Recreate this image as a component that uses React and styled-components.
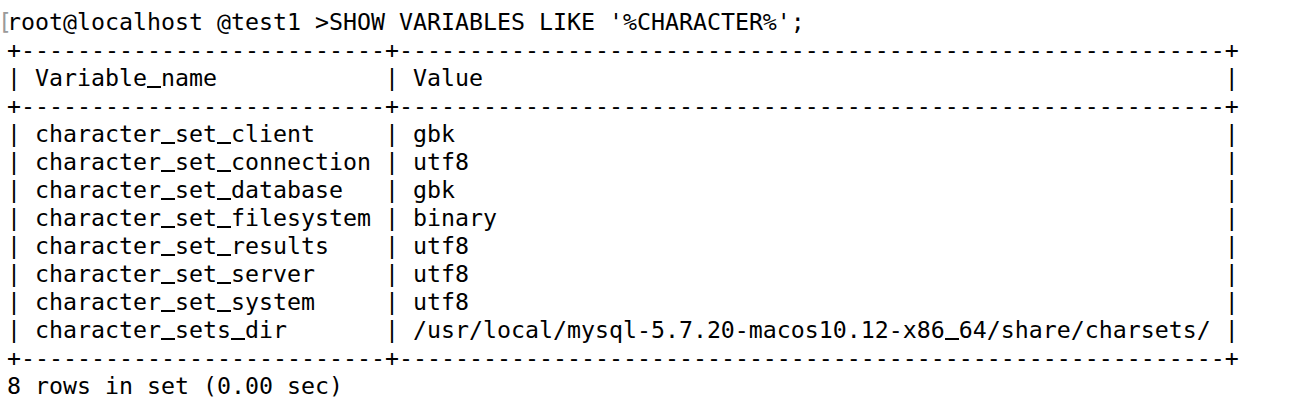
import React from 'react';
import styled, { createGlobalStyle } from 'styled-components';

const GlobalStyle = createGlobalStyle`
  html, body {
    margin: 0;
    padding: 0;
    background: #ffffff;
  }
`;

const Terminal = styled.div`
  width: 1300px;
  height: 418px;
  box-sizing: border-box;
  padding: 8px 0 0 7px;
  background: #ffffff;
  color: #000000;
  font-family: "DejaVu Sans Mono", "Liberation Mono", monospace;
  font-size: 23.25px;
  line-height: 28px;
  overflow: hidden;
`;

const Line = styled.div`
  white-space: pre;
  height: 28px;
`;

// grey selection marker sitting in the left gutter before the prompt
const Bracket = styled.span`
  margin-left: -9px;
  margin-right: -5px;
  color: #9a9a9a;
`;

// Menlo draws a heavier underscore than DejaVu, so draw it as a bar
const Under = styled.span`
  display: inline-block;
  width: 1ch;
  height: 0;
  border-bottom: 2px solid #000;
  box-sizing: content-box;
  vertical-align: -2px;
`;

const rows = [
  ['character_set_client', 'gbk'],
  ['character_set_connection', 'utf8'],
  ['character_set_database', 'gbk'],
  ['character_set_filesystem', 'binary'],
  ['character_set_results', 'utf8'],
  ['character_set_server', 'utf8'],
  ['character_set_system', 'utf8'],
  ['character_sets_dir', '/usr/local/mysql-5.7.20-macos10.12-x86_64/share/charsets/'],
];

const header = ['Variable_name', 'Value'];

const widths = header.map((h, i) =>
  Math.max(h.length, ...rows.map(r => r[i].length))
);

const border = '+' + widths.map(w => '-'.repeat(w + 2)).join('+') + '+';
const fmt = cells =>
  '|' + cells.map((c, i) => ' ' + c.padEnd(widths[i]) + ' ').join('|') + '|';

const Text = ({ children }) => {
  const parts = children.split('_');
  return parts.map((p, i) => (
    <React.Fragment key={i}>
      {i > 0 && <Under />}
      {p}
    </React.Fragment>
  ));
};

const App = () => (
  <>
    <GlobalStyle />
    <Terminal>
      <Line>
        <Bracket>[</Bracket>root@localhost @test1 &gt;SHOW VARIABLES LIKE '%CHARACTER%';
      </Line>
      <Line>{border}</Line>
      <Line><Text>{fmt(header)}</Text></Line>
      <Line>{border}</Line>
      {rows.map(r => (
        <Line key={r[0]}><Text>{fmt(r)}</Text></Line>
      ))}
      <Line>{border}</Line>
      <Line>8 rows in set (0.00 sec)</Line>
    </Terminal>
  </>
);

export default App;
